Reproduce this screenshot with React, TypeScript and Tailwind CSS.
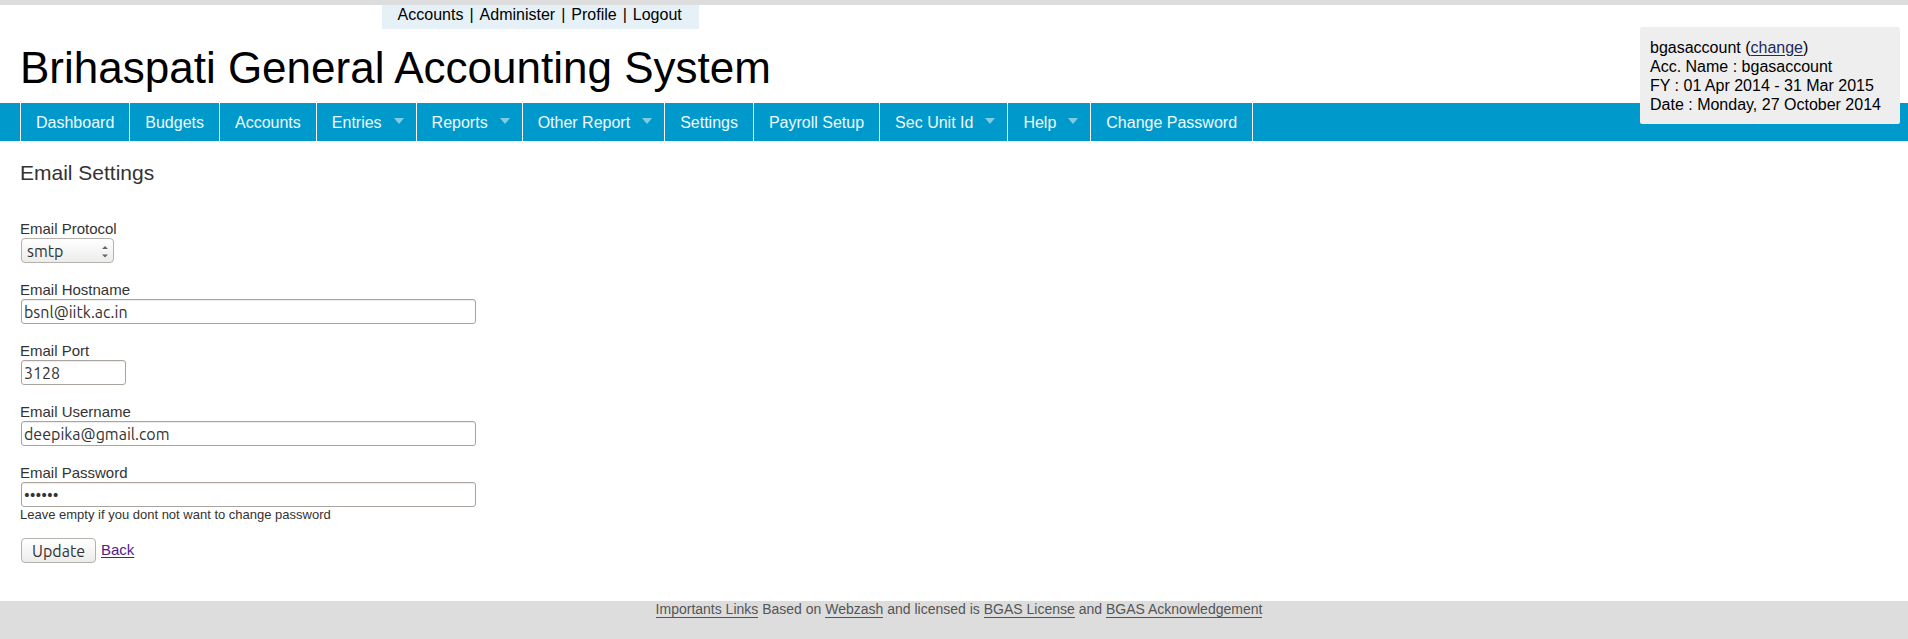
import React, { useState } from "react";

type NavItem = { label: string; menu?: boolean };

const navItems: NavItem[] = [
  { label: "Dashboard" },
  { label: "Budgets" },
  { label: "Accounts" },
  { label: "Entries", menu: true },
  { label: "Reports", menu: true },
  { label: "Other Report", menu: true },
  { label: "Settings" },
  { label: "Payroll Setup" },
  { label: "Sec Unit Id", menu: true },
  { label: "Help", menu: true },
  { label: "Change Password" },
];

const userLinks = ["Accounts", "Administer", "Profile", "Logout"];

const controlFont = "font-['Ubuntu','Noto_Sans',sans-serif] text-[16px] text-[#333]";
const inputStyle =
  "block h-[25px] rounded-[3px] border border-[#aaa49e] bg-white px-[2px] shadow-[inset_0_1px_1px_#ececec] outline-none focus:border-[#0099cc] " +
  controlFont;

function Field({ id, label, children }: { id: string; label: string; children: React.ReactNode }) {
  return (
    <div>
      <label htmlFor={id} className="block text-[15px] leading-[18px]">
        {label}
      </label>
      <div className="pl-px">{children}</div>
    </div>
  );
}

function FooterLink({ children }: { children: React.ReactNode }) {
  return (
    <a href="#" className="border-b border-[#555]">
      {children}
    </a>
  );
}

export default function App() {
  const [protocol, setProtocol] = useState("smtp");

  return (
    <div className="flex min-h-screen flex-col bg-[#dddddd] font-['Liberation_Sans',Arial,sans-serif] text-[#333]">
      <div className="relative mt-[5px] bg-white">
        <header className="text-black">
          <div className="flex pl-[20%]">
            <div className="flex gap-[6px] bg-[#e5f1f6] pr-[17px] pb-1 pl-4 text-[16px] leading-5">
              {userLinks.map((link, i) => (
                <React.Fragment key={link}>
                  {i > 0 && <span>|</span>}
                  <a href="#">{link}</a>
                </React.Fragment>
              ))}
            </div>
          </div>
          <h1 className="px-5 pt-[14px] pb-[10px] text-[44px] leading-[50px]">Brihaspati General Accounting System</h1>
        </header>

        <aside className="absolute top-[22px] right-2 w-[260px] rounded-[2px] bg-[#eeeeee] pt-[11px] pb-[10px] pl-[10px] text-[16px] leading-[19px] text-black">
          <p>
            bgasaccount (
            <a href="#" className="text-[#1f2a5c] underline underline-offset-2">
              change
            </a>
            )
          </p>
          <p>Acc. Name : bgasaccount</p>
          <p>FY : 01 Apr 2014 - 31 Mar 2015</p>
          <p>Date : Monday, 27 October 2014</p>
        </aside>

        <nav className="bg-[#0099cc] pl-5">
          <ul className="flex border-l border-white">
            {navItems.map((item) => (
              <li key={item.label} className="border-r border-white">
                <a
                  href="#"
                  className={
                    item.menu
                      ? "flex h-[38px] items-center gap-3 pr-3 pl-[15px] text-[16px] leading-5 whitespace-nowrap text-[#eefaff]"
                      : "flex h-[38px] items-center px-[15px] text-[16px] leading-5 whitespace-nowrap text-[#eefaff]"
                  }
                >
                  <span className="pt-px">{item.label}</span>
                  {item.menu && (
                    <svg width="10" height="10" viewBox="0 0 10 10" aria-hidden="true">
                      <path d="M0 1h10L5 7z" fill="#80cce5" />
                    </svg>
                  )}
                </a>
              </li>
            ))}
          </ul>
        </nav>

        <main className="px-5 pt-5 pb-[38px]">
          <h2 className="text-[21px] leading-6">Email Settings</h2>
          <form className="pt-[35px]" onSubmit={(e) => e.preventDefault()}>
            <div className="flex flex-col gap-[18px]">
              <Field id="protocol" label="Email Protocol">
                <div className="relative w-[93px]">
                  <select
                    id="protocol"
                    value={protocol}
                    onChange={(e) => setProtocol(e.target.value)}
                    className={
                      "block h-[25px] w-full appearance-none rounded-[4px] border border-[#b5b1ac] bg-linear-to-b from-white to-[#ececeb] pl-[5px] leading-[22px] outline-none " +
                      controlFont
                    }
                  >
                    <option>smtp</option>
                    <option>sendmail</option>
                  </select>
                  <svg
                    className="pointer-events-none absolute top-[7px] right-[6px]"
                    width="6"
                    height="13"
                    viewBox="0 0 6 13"
                    aria-hidden="true"
                  >
                    <path d="M0 4 3 1l3 3zM0 9.500h6l-3 3z" fill="#666" />
                  </svg>
                </div>
              </Field>
              <Field id="hostname" label="Email Hostname">
                <input id="hostname" type="text" defaultValue="bsnl@iitk.ac.in" className={inputStyle + " w-[455px]"} />
              </Field>
              <Field id="port" label="Email Port">
                <input id="port" type="text" defaultValue="3128" className={inputStyle + " w-[105px]"} />
              </Field>
              <Field id="username" label="Email Username">
                <input id="username" type="text" defaultValue="deepika@gmail.com" className={inputStyle + " w-[455px]"} />
              </Field>
              <Field id="password" label="Email Password">
                <input
                  id="password"
                  type="password"
                  defaultValue="secret"
                  aria-describedby="password-hint"
                  className={inputStyle + " w-[455px]"}
                />
              </Field>
            </div>
            <p id="password-hint" className="text-[13px] leading-4">
              Leave empty if you dont not want to change password
            </p>
            <div className="flex items-center gap-[5px] pt-[15px] pl-px">
              <button
                type="submit"
                className={
                  "h-[25px] w-[75px] rounded-[4px] border border-[#b5b1ac] bg-linear-to-b from-white to-[#ececeb] leading-[22px] " +
                  controlFont
                }
              >
                Update
              </button>
              <a href="#" className="text-[15px] text-[#551a8b] underline underline-offset-2">
                Back
              </a>
            </div>
          </form>
        </main>
      </div>

      <footer className="pl-[10px] text-center text-[14px] leading-[17px] text-[#555]">
        <FooterLink>Importants Links</FooterLink> Based on <FooterLink>Webzash</FooterLink> and licensed is{" "}
        <FooterLink>BGAS License</FooterLink> and <FooterLink>BGAS Acknowledgement</FooterLink>
      </footer>
    </div>
  );
}
